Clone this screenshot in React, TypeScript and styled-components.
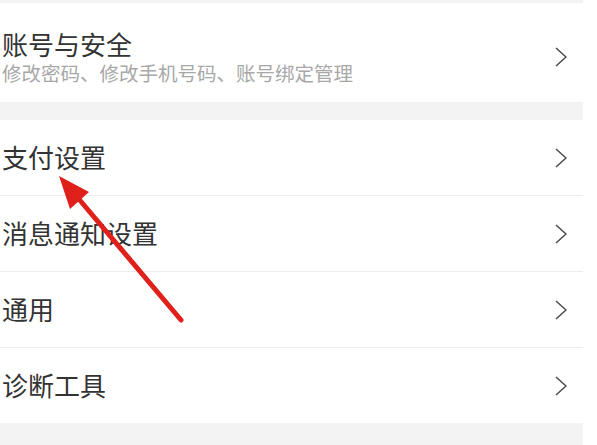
import styled, { createGlobalStyle } from "styled-components";

const GlobalStyle = createGlobalStyle`
  html, body {
    margin: 0;
    padding: 0;
    background: #ffffff;
  }
  body {
    font-family: "Liberation Sans", "Noto Sans CJK SC", sans-serif;
  }
`;

const Page = styled.div`
  position: relative;
  width: 583px;
  height: 445px;
  overflow: hidden;
  background: #ffffff;
`;

const Gap = styled.div<{ h: number }>`
  height: ${props => props.h}px;
  background: #f3f3f3;
`;

const Group = styled.ul`
  margin: 0;
  padding: 0;
  list-style: none;
  background: #ffffff;
`;

const Row = styled.li<{ tall?: boolean }>`
  display: flex;
  align-items: center;
  justify-content: space-between;
  box-sizing: border-box;
  height: ${props => (props.tall ? 99 : 76)}px;
  padding: ${props => (props.tall ? "11px 16px 0 2px" : "2px 16px 0 2px")};
  border-bottom: 1px solid #ededed;

  &:last-child {
    border-bottom: none;
    height: ${props => (props.tall ? 99 : 75)}px;
  }
`;

const TextBlock = styled.div`
  display: flex;
  flex-direction: column;
  gap: 4px;
`;

const Title = styled.span`
  font-size: 26px;
  line-height: 28px;
  color: #333333;
`;

const Sub = styled.span`
  font-size: 19.5px;
  line-height: 20px;
  color: #a8a8a8;
`;

const Arrow = styled.svg`
  position: absolute;
  left: 0;
  top: 0;
  pointer-events: none;
`;

function Chevron() {
  return (
    <svg width="12" height="20" viewBox="0 0 12 20" style={{ marginTop: -2 }}>
      <polyline points="1,1 11,10 1,19" fill="none" stroke="#4a4a4a" strokeWidth="1.5" />
    </svg>
  );
}

const items = ["支付设置", "消息通知设置", "通用", "诊断工具"];

function App() {
  return (
    <Page>
      <GlobalStyle />
      <Gap h={3} />
      <Group>
        <Row tall>
          <TextBlock>
            <Title>账号与安全</Title>
            <Sub>修改密码、修改手机号码、账号绑定管理</Sub>
          </TextBlock>
          <Chevron />
        </Row>
      </Group>
      <Gap h={18} />
      <Group>
        {items.map(item => (
          <Row key={item}>
            <Title>{item}</Title>
            <Chevron />
          </Row>
        ))}
      </Group>
      <Gap h={22} />
      <Arrow width="583" height="445" viewBox="0 0 583 445">
        <line x1="181" y1="320" x2="78" y2="198" stroke="#e0201a" strokeWidth="5" strokeLinecap="round" />
        <polygon points="59,176 89,192 70,209" fill="#e0201a" />
      </Arrow>
    </Page>
  );
}

export default App;
